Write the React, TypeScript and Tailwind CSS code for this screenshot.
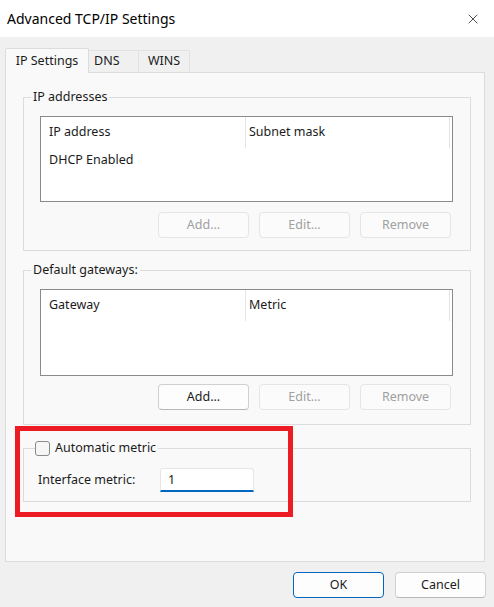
import { X } from "lucide-react";

const font = "font-['Noto_Sans',sans-serif]";

function Btn({
  label,
  disabled,
  primary,
}: {
  label: string;
  disabled?: boolean;
  primary?: boolean;
}) {
  const tone = disabled
    ? "border-[#e5e5e5] bg-[#fbfbfb] text-[#a0a0a0]"
    : primary
      ? "border-[#0067c0] bg-[#fdfdfd] text-[#1b1b1b]"
      : "border-[#d0d0d0] border-b-[#b8b8b8] bg-[#fdfdfd] text-[#1b1b1b]";
  return (
    <button
      className={`w-[91px] h-[26px] rounded-[4px] border text-[12.5px] leading-none ${tone}`}
    >
      {label}
    </button>
  );
}

function ListBox({
  cols,
  rows,
  height,
}: {
  cols: string[];
  rows: string[];
  height: string;
}) {
  return (
    <div className={`w-[413px] ${height} border border-[#8a8a8a] bg-white`}>
      <div className="flex h-[31px]">
        <div className="w-[205px] border-r border-[#e5e5e5] pl-[8px] pt-[6px] leading-[18px]">
          {cols[0]}
        </div>
        <div className="w-[204px] border-r border-[#e5e5e5] pl-[3px] pt-[6px] leading-[18px]">
          {cols[1]}
        </div>
      </div>
      {rows.map((r) => (
        <div key={r} className="pl-[8px] pt-[3px] leading-[18px]">
          {r}
        </div>
      ))}
    </div>
  );
}

function Legend({ children }: { children: React.ReactNode }) {
  return (
    <div className="absolute left-[7px] top-[-9px] h-[16px] leading-[16px] bg-[#f9f9f9] px-[2px]">
      {children}
    </div>
  );
}

export default function App() {
  return (
    <div
      className={`w-[494px] h-[607px] bg-[#f0f0f0] text-[12.5px] text-[#1b1b1b] ${font} flex flex-col relative overflow-hidden`}
    >
      {/* title bar */}
      <div className="h-[37px] bg-white flex items-center justify-between pl-[7px] pr-[13px]">
        <span className="text-[14px] text-black">Advanced TCP/IP Settings</span>
        <X size={16} strokeWidth={1.2} className="text-[#222]" />
      </div>

      {/* tabs */}
      <div className="pt-[10px] pl-[5px] flex items-end h-[35px]">
        <div className="relative z-10 w-[84px] h-[25px] -mb-px bg-[#f9f9f9] border border-b-0 border-[#dcdcdc] rounded-t-[2px] flex items-center justify-center leading-none">
          IP Settings
        </div>
        <div className="w-[50px] h-[22px] bg-[#f0f0f0] border border-l-0 border-b-0 border-[#e2e2e2] flex items-center pl-[5px] leading-none">
          DNS
        </div>
        <div className="w-[51px] h-[22px] bg-[#f0f0f0] border border-l-0 border-b-0 border-[#e2e2e2] flex items-center justify-center leading-none">
          WINS
        </div>
      </div>

      {/* tab panel */}
      <div className="ml-[5px] w-[480px] h-[490px] bg-[#f9f9f9] border border-[#dcdcdc] pt-[24px] pl-[17px]">
        <div className="relative w-[448px] h-[154px] border border-[#dcdcdc] pt-[18px] pl-[16px]">
          <Legend>IP addresses</Legend>
          <ListBox
            cols={["IP address", "Subnet mask"]}
            rows={["DHCP Enabled"]}
            height="h-[86px]"
          />
          <div className="w-[413px] flex justify-end gap-[10px] pr-[2px] mt-[10px]">
            <Btn label="Add..." disabled />
            <Btn label="Edit..." disabled />
            <Btn label="Remove" disabled />
          </div>
        </div>

        <div className="relative mt-[19px] w-[448px] h-[155px] border border-[#dcdcdc] pt-[18px] pl-[16px]">
          <Legend>Default gateways:</Legend>
          <ListBox cols={["Gateway", "Metric"]} rows={[]} height="h-[87px]" />
          <div className="w-[413px] flex justify-end gap-[10px] pr-[2px] mt-[8px]">
            <Btn label="Add..." />
            <Btn label="Edit..." disabled />
            <Btn label="Remove" disabled />
          </div>
        </div>

        <div className="relative mt-[23px] w-[448px] h-[54px] border border-[#dcdcdc] pt-[19px] pl-[14px]">
          <div className="absolute left-[11px] top-[-9px] h-[16px] flex items-center gap-[5px] bg-[#f9f9f9] pr-[2px]">
            <span className="w-[15px] h-[15px] rounded-[3px] border border-[#8a8a8a] bg-[#f6f6f6]" />
            <span className="leading-[16px]">Automatic metric</span>
          </div>
          <div className="flex items-center">
            <span className="w-[122px] leading-[24px]">Interface metric:</span>
            <div className="w-[94px] h-[24px] bg-white border border-[#e5e5e5] border-b-2 border-b-[#0067c0] rounded-t-[3px] pl-[7px] leading-[21px]">
              1
            </div>
          </div>
        </div>
      </div>

      {/* dialog buttons */}
      <div className="flex justify-end gap-[11px] pr-[8px] mt-[10px]">
        <Btn label="OK" primary />
        <Btn label="Cancel" />
      </div>

      {/* red annotation */}
      <div className="absolute left-[15px] top-[426px] w-[278px] h-[91px] border-[5px] border-[#ed1c24] pointer-events-none" />
    </div>
  );
}
